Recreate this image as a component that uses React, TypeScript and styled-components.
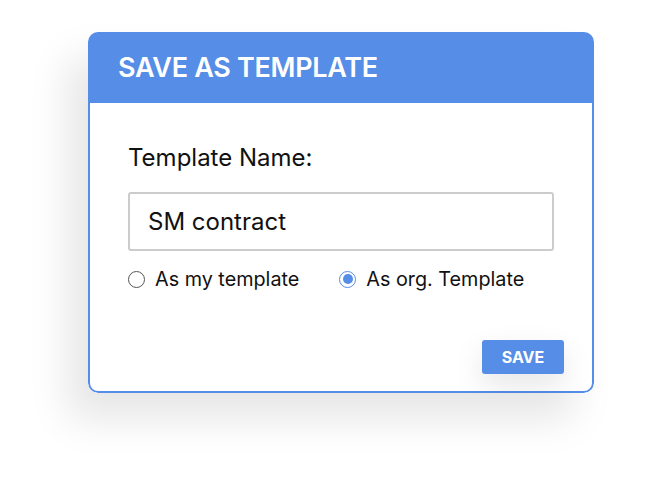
import React from "react";
import styled, { createGlobalStyle } from "styled-components";

const GlobalStyle = createGlobalStyle`
  body {
    margin: 0;
    background: #ffffff;
    font-family: Inter, "Noto Sans", sans-serif;
  }
`;

const Page = styled.div`
  width: 655px;
  height: 482px;
  padding: 32px 0 0 88px;
  box-sizing: border-box;
`;

const Card = styled.div`
  width: 506px;
  border-radius: 10px;
  background: #ffffff;
  box-shadow: -20px 26px 40px rgba(0, 0, 0, 0.1);
  overflow: hidden;
`;

const Header = styled.div`
  height: 71px;
  background: #568de6;
  display: flex;
  align-items: center;
  padding-left: 30px;
  color: #ffffff;
  font-size: 27px;
  font-weight: 600;
  letter-spacing: -0.3px;
`;

const Body = styled.div`
  border: 2px solid #568de6;
  border-top: none;
  border-radius: 0 0 10px 10px;
  padding: 41px 38px 17px 38px;
  display: flex;
  flex-direction: column;
`;

const Label = styled.div`
  font-size: 24px;
  color: #111111;
  line-height: 28px;
`;

const NameInput = styled.div`
  margin-top: 20px;
  height: 59px;
  border: 2px solid #cccccc;
  border-radius: 3px;
  box-sizing: border-box;
  display: flex;
  align-items: center;
  padding-left: 18px;
  font-size: 24px;
  color: #111111;
`;

const RadioRow = styled.div`
  margin-top: 16px;
  display: flex;
  gap: 40px;
  line-height: 24px;
`;

const RadioOption = styled.label`
  display: flex;
  align-items: center;
  gap: 10px;
  font-size: 19.8px;
  color: #111111;
`;

const Circle = styled.span<{ $checked?: boolean }>`
  width: 17px;
  height: 17px;
  border-radius: 50%;
  border: 1.5px solid ${p => (p.$checked ? "#568de6" : "#555555")};
  box-sizing: border-box;
  display: flex;
  align-items: center;
  justify-content: center;

  &::after {
    content: "";
    display: ${p => (p.$checked ? "block" : "none")};
    width: 10px;
    height: 10px;
    border-radius: 50%;
    background: #568de6;
  }
`;

const Footer = styled.div`
  margin-top: 49px;
  margin-right: -10px;
  display: flex;
  justify-content: flex-end;
`;

const SaveButton = styled.button`
  width: 82px;
  height: 34px;
  border: none;
  border-radius: 3px;
  background: #568de6;
  color: #ffffff;
  font-family: Inter, sans-serif;
  font-size: 16px;
  font-weight: 700;
  padding: 0;
  box-shadow: 0 12px 30px rgba(0, 0, 0, 0.1);
`;

export default function App() {
  return (
    <Page>
      <GlobalStyle />
      <Card>
        <Header>SAVE AS TEMPLATE</Header>
        <Body>
          <Label>Template Name:</Label>
          <NameInput>SM contract</NameInput>
          <RadioRow>
            <RadioOption>
              <Circle />
              As my template
            </RadioOption>
            <RadioOption>
              <Circle $checked />
              As org. Template
            </RadioOption>
          </RadioRow>
          <Footer>
            <SaveButton>SAVE</SaveButton>
          </Footer>
        </Body>
      </Card>
    </Page>
  );
}
